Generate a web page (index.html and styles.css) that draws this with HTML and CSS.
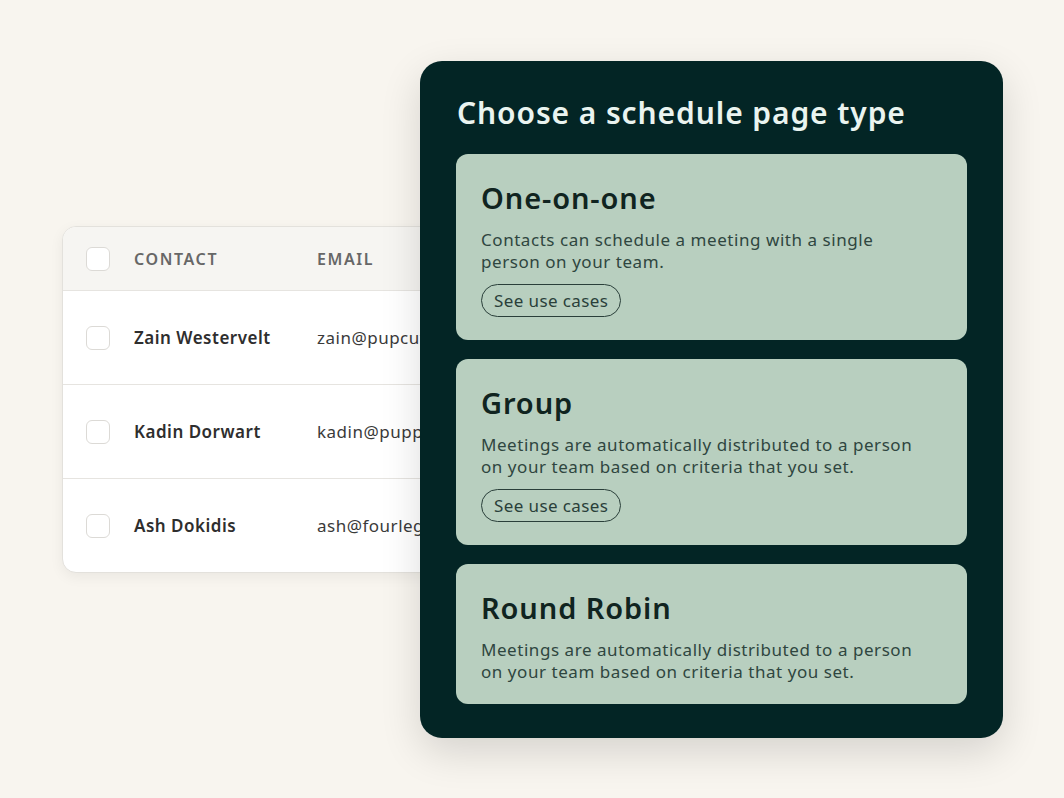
FILE: index.html
```html
<!DOCTYPE html>
<html lang="en">
<head>
  <meta charset="UTF-8">
  <title>Schedule page type</title>
  <link rel="stylesheet" href="styles.css">
</head>
<body>
<div class="stage">

  <div class="contacts">
    <div class="row head">
      <span class="check"></span>
      <span class="col_name">CONTACT</span>
      <span class="col_email">EMAIL</span>
    </div>
    <div class="row">
      <span class="check"></span>
      <span class="col_name">Zain Westervelt</span>
      <span class="col_email">zain@pupcuts.com</span>
    </div>
    <div class="row">
      <span class="check"></span>
      <span class="col_name">Kadin Dorwart</span>
      <span class="col_email">kadin@puppylove.com</span>
    </div>
    <div class="row">
      <span class="check"></span>
      <span class="col_name">Ash Dokidis</span>
      <span class="col_email">ash@fourlegs.com</span>
    </div>
  </div>

  <div class="picker">
    <h2>Choose a schedule page type</h2>

    <div class="option">
      <h3>One-on-one</h3>
      <p>Contacts can schedule a meeting with a single<br>person on your team.</p>
      <button type="button">See use cases</button>
    </div>

    <div class="option">
      <h3>Group</h3>
      <p>Meetings are automatically distributed to a person<br>on your team based on criteria that you set.</p>
      <button type="button">See use cases</button>
    </div>

    <div class="option">
      <h3>Round Robin</h3>
      <p>Meetings are automatically distributed to a person<br>on your team based on criteria that you set.</p>
    </div>
  </div>

</div>
</body>
</html>
```

FILE: styles.css
```css
* {
  box-sizing: border-box;
}

body {
  background: #f8f5ef;
  font-family: 'Noto Sans', Lato, sans-serif;
  margin: 0;
  padding: 0;
}

.stage {
  display: grid;
  grid-template-columns: 358px 583px;
  padding: 61px 0 61px 62px;
}

/* contacts table sits behind the picker */
.contacts {
  grid-column: 1 / 3;
  grid-row: 1;
  align-self: start;
  width: 460px;
  margin-top: 165px;
  background: #fff;
  border: 1px solid #e3e1dc;
  border-radius: 14px;
  box-shadow: 0 4px 14px rgba(0, 0, 0, 0.06);
  overflow: hidden;
}

.row {
  display: flex;
  align-items: center;
  height: 94px;
  padding-left: 23px;
  border-top: 1px solid #e6e4e0;
  font-size: 17px;
  letter-spacing: 0.5px;
  color: #3a3a3a;
}

.row.head {
  height: 63px;
  border-top: none;
  background: #f6f5f2;
  color: #676767;
  font-weight: 600;
  font-size: 16px;
  letter-spacing: 1.6px;
}

.check {
  width: 24px;
  height: 24px;
  border: 1.5px solid #dcdad6;
  border-radius: 6px;
  background: #fff;
  margin-right: 24px;
  flex-shrink: 0;
}

.col_name {
  width: 183px;
  flex-shrink: 0;
}

.row:not(.head) .col_name {
  font-weight: 600;
  color: #2e2e2e;
}

.col_email {
  white-space: nowrap;
}

/* schedule type picker */
.picker {
  grid-column: 2;
  grid-row: 1;
  position: relative;
  z-index: 1;
  background: #032525;
  border-radius: 22px;
  padding: 34px 36px 34px 36px;
  box-shadow: 0 14px 40px rgba(0, 0, 0, 0.14);
}

.picker h2 {
  margin: 0 0 23px 1px;
  font-size: 30px;
  line-height: 36px;
  font-weight: 600;
  letter-spacing: 0.9px;
  color: #eaf4f0;
}

.option {
  background: #b8cfbf;
  border-radius: 12px;
  padding: 26px 24px 23px 25px;
  margin-bottom: 19px;
}

.option:last-child {
  margin-bottom: 0;
  padding-bottom: 21px;
}

.option h3 {
  margin: 0 0 14px;
  font-size: 29px;
  line-height: 35px;
  font-weight: 600;
  letter-spacing: 0.9px;
  color: #102420;
}

.option p {
  margin: 0;
  font-size: 17px;
  line-height: 22px;
  letter-spacing: 0.55px;
  color: #2f4640;
}

.option button {
  margin-top: 11px;
  height: 33px;
  padding: 0 12px;
  background: transparent;
  border: 1.5px solid #2a3f3a;
  border-radius: 17px;
  font-family: inherit;
  font-size: 17px;
  letter-spacing: 0.4px;
  color: #2a3f3a;
}
```
